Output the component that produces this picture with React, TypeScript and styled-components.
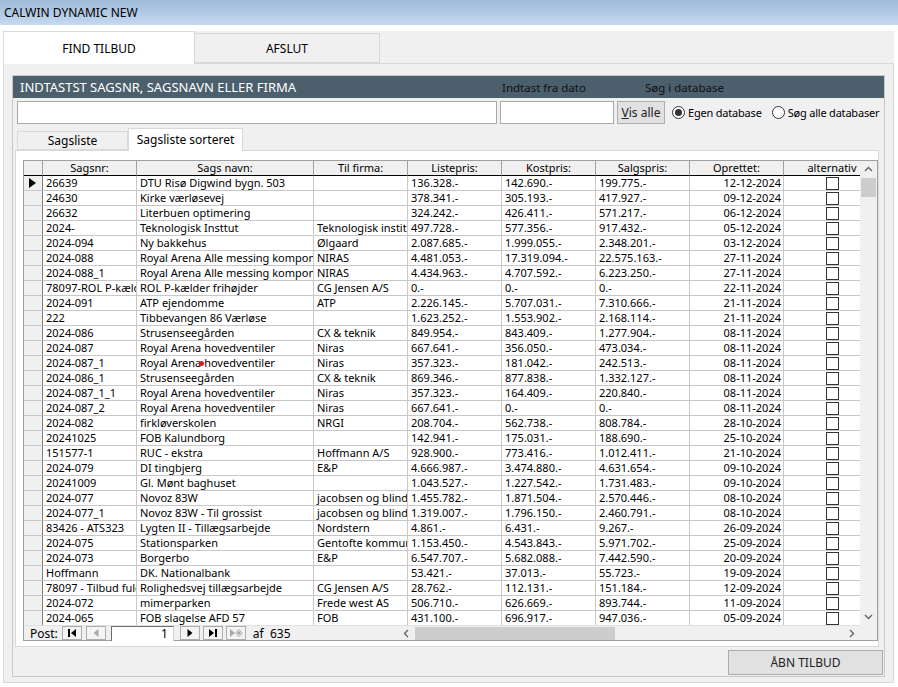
import React from "react";
import styled, { createGlobalStyle } from "styled-components";

const GlobalStyle = createGlobalStyle`
  html, body { margin: 0; padding: 0; background: #fff; }
  body {
    font-family: "Noto Sans", "Open Sans", sans-serif;
    font-size: 11px;
    color: #000;
  }
  * { box-sizing: border-box; }
`;

type Row = [string, string, string, string, string, string, string];

const rows: Row[] = [
  ["26639", "DTU Risø Digwind bygn. 503", "", "136.328.-", "142.690.-", "199.775.-", "12-12-2024"],
  ["24630", "Kirke værløsevej", "", "378.341.-", "305.193.-", "417.927.-", "09-12-2024"],
  ["26632", "Literbuen optimering", "", "324.242.-", "426.411.-", "571.217.-", "06-12-2024"],
  ["2024-", "Teknologisk Insttut", "Teknologisk institut", "497.728.-", "577.356.-", "917.432.-", "05-12-2024"],
  ["2024-094", "Ny bakkehus", "Ølgaard", "2.087.685.-", "1.999.055.-", "2.348.201.-", "03-12-2024"],
  ["2024-088", "Royal Arena Alle messing komponenter", "NIRAS", "4.481.053.-", "17.319.094.-", "22.575.163.-", "27-11-2024"],
  ["2024-088_1", "Royal Arena Alle messing komponenter", "NIRAS", "4.434.963.-", "4.707.592.-", "6.223.250.-", "27-11-2024"],
  ["78097-ROL P-kælder", "ROL P-kælder frihøjder", "CG Jensen A/S", "0.-", "0.-", "0.-", "22-11-2024"],
  ["2024-091", "ATP ejendomme", "ATP", "2.226.145.-", "5.707.031.-", "7.310.666.-", "21-11-2024"],
  ["222", "Tibbevangen 86 Værløse", "", "1.623.252.-", "1.553.902.-", "2.168.114.-", "21-11-2024"],
  ["2024-086", "Strusenseegården", "CX & teknik", "849.954.-", "843.409.-", "1.277.904.-", "08-11-2024"],
  ["2024-087", "Royal Arena hovedventiler", "Niras", "667.641.-", "356.050.-", "473.034.-", "08-11-2024"],
  ["2024-087_1", "Royal Arena hovedventiler", "Niras", "357.323.-", "181.042.-", "242.513.-", "08-11-2024"],
  ["2024-086_1", "Strusenseegården", "CX & teknik", "869.346.-", "877.838.-", "1.332.127.-", "08-11-2024"],
  ["2024-087_1_1", "Royal Arena hovedventiler", "Niras", "357.323.-", "164.409.-", "220.840.-", "08-11-2024"],
  ["2024-087_2", "Royal Arena hovedventiler", "Niras", "667.641.-", "0.-", "0.-", "08-11-2024"],
  ["2024-082", "firkløverskolen", "NRGI", "208.704.-", "562.738.-", "808.784.-", "28-10-2024"],
  ["20241025", "FOB Kalundborg", "", "142.941.-", "175.031.-", "188.690.-", "25-10-2024"],
  ["151577-1", "RUC - ekstra", "Hoffmann A/S", "928.900.-", "773.416.-", "1.012.411.-", "21-10-2024"],
  ["2024-079", "DI tingbjerg", "E&P", "4.666.987.-", "3.474.880.-", "4.631.654.-", "09-10-2024"],
  ["20241009", "Gl. Mønt baghuset", "", "1.043.527.-", "1.227.542.-", "1.731.483.-", "09-10-2024"],
  ["2024-077", "Novoz 83W", "jacobsen og blindkjær", "1.455.782.-", "1.871.504.-", "2.570.446.-", "08-10-2024"],
  ["2024-077_1", "Novoz 83W - Til grossist", "jacobsen og blindkjær", "1.319.007.-", "1.796.150.-", "2.460.791.-", "08-10-2024"],
  ["83426 - ATS323", "Lygten II - Tillægsarbejde", "Nordstern", "4.861.-", "6.431.-", "9.267.-", "26-09-2024"],
  ["2024-075", "Stationsparken", "Gentofte kommune", "1.153.450.-", "4.543.843.-", "5.971.702.-", "25-09-2024"],
  ["2024-073", "Borgerbo", "E&P", "6.547.707.-", "5.682.088.-", "7.442.590.-", "20-09-2024"],
  ["Hoffmann", "DK. Nationalbank", "", "53.421.-", "37.013.-", "55.723.-", "19-09-2024"],
  ["78097 - Tilbud fuld", "Rolighedsvej tillægsarbejde", "CG Jensen A/S", "28.762.-", "112.131.-", "151.184.-", "12-09-2024"],
  ["2024-072", "mimerparken", "Frede west AS", "506.710.-", "626.669.-", "893.744.-", "11-09-2024"],
  ["2024-065", "FOB slagelse AFD 57", "FOB", "431.100.-", "696.917.-", "947.036.-", "05-09-2024"],
];

const headers = ["Sagsnr:", "Sags navn:", "Til firma:", "Listepris:", "Kostpris:", "Salgspris:", "Oprettet:", "alternativ"];
const COLS = "19px 94px 177px 94px 94px 94px 94px 94px 97px";

const Window = styled.div`
  position: relative;
  width: 898px;
  height: 687px;
  overflow: hidden;
  background: #fff;
`;

const TitleBar = styled.div`
  height: 25px;
  padding-left: 4px;
  display: flex;
  align-items: center;
  background: linear-gradient(#9fb9d9, #c5d9ef);
  font-size: 12px;
`;

const Frame = styled.div`
  margin: 6px 0 0 3px;
  width: 891px;
  height: 652px;
  background: #f0f0f0;
`;

const TabStrip = styled.div`
  display: flex;
  align-items: flex-end;
  height: 32px;
`;

const Tab = styled.div<{ $active?: boolean; $w: number }>`
  position: relative;
  z-index: 1;
  width: ${(p) => p.$w}px;
  height: ${(p) => (p.$active ? 33 : 30)}px;
  margin-bottom: ${(p) => (p.$active ? -1 : 0)}px;
  background: ${(p) => (p.$active ? "#fff" : "#f0f0f0")};
  border: 1px solid #d9d9d9;
  border-bottom: ${(p) => (p.$active ? "none" : "1px solid #d9d9d9")};
  border-left: ${(p) => (p.$active ? "1px solid #d9d9d9" : "none")};
  display: flex;
  align-items: center;
  justify-content: center;
  font-size: 12px;
`;

const TabPanel = styled.div`
  height: 620px;
  border: 1px solid #d9d9d9;
  padding: 11px 7px 0 8px;
`;

const GroupBox = styled.div`
  width: 873px;
  height: 602px;
  border: 1px solid #c8c8c8;
  display: flex;
  flex-direction: column;
`;

const HeaderBar = styled.div`
  height: 22px;
  background: #4b5f6c;
  display: grid;
  grid-template-columns: 482px 143px 1fr;
  align-items: center;
  padding-left: 7px;
`;

const HeaderLabel = styled.span<{ $light?: boolean }>`
  color: ${(p) => (p.$light ? "#fff" : "#111")};
  font-size: ${(p) => (p.$light ? 13 : 11.5)}px;
  white-space: nowrap;
`;

const SearchRow = styled.div`
  margin-top: 2px;
  height: 24px;
  padding-left: 4px;
  display: flex;
  align-items: center;
  gap: 3px;
`;

const TextBox = styled.div<{ $w: number }>`
  flex: 0 0 ${(p) => p.$w}px;
  height: 23px;
  background: #fff;
  border: 1px solid #a9a9a9;
`;

const Button = styled.div<{ $w: number; $h: number }>`
  flex: 0 0 ${(p) => p.$w}px;
  height: ${(p) => p.$h}px;
  background: #e1e1e1;
  border: 1px solid #adadad;
  display: flex;
  align-items: center;
  justify-content: center;
  font-size: 12px;
  color: #222;
  white-space: nowrap;
`;

const RadioGroup = styled.div`
  margin-left: 4px;
  display: flex;
  align-items: center;
  gap: 10px;
  font-size: 11px;
  letter-spacing: -0.2px;
  white-space: nowrap;
`;

const RadioItem = styled.label`
  display: flex;
  align-items: center;
  gap: 3px;
`;

const RadioDot = styled.span<{ $on?: boolean }>`
  flex: 0 0 13px;
  height: 13px;
  border-radius: 50%;
  border: 1px solid #333;
  background: #fff;
  display: flex;
  align-items: center;
  justify-content: center;
  &::after {
    content: "";
    width: 7px;
    height: 7px;
    border-radius: 50%;
    background: ${(p) => (p.$on ? "#333" : "transparent")};
  }
`;

const SubTabs = styled.div`
  margin: 4px 0 0 4px;
  height: 22px;
  display: flex;
  align-items: flex-end;
`;

const SubTab = styled.div<{ $active?: boolean; $w: number }>`
  position: relative;
  z-index: 1;
  width: ${(p) => p.$w}px;
  height: ${(p) => (p.$active ? 23 : 19)}px;
  margin-bottom: ${(p) => (p.$active ? -1 : 0)}px;
  background: ${(p) => (p.$active ? "#fff" : "#f0f0f0")};
  border: 1px solid #d9d9d9;
  border-bottom: ${(p) => (p.$active ? "none" : "1px solid #d9d9d9")};
  display: flex;
  align-items: ${(p) => (p.$active ? "flex-start" : "center")};
  padding-top: ${(p) => (p.$active ? 2 : 0)}px;
  justify-content: center;
  font-size: 12px;
`;

const SubPanel = styled.div`
  margin-left: 2px;
  width: 864px;
  height: 497px;
  background: #fff;
  border: 1px solid #d9d9d9;
  padding: 9px 0 0 7px;
`;

const Sheet = styled.div`
  width: 855px;
  height: 481px;
  border: 1px solid #a0a0a0;
  display: grid;
  grid-template-columns: 836px 17px;
  grid-template-rows: 464px 15px;
  background: #fff;
`;

const GridBody = styled.div`
  overflow: hidden;
`;

const GridRow = styled.div`
  display: grid;
  grid-template-columns: ${COLS};
  width: 863px;
  height: 15px;
`;

const HeadCell = styled.div`
  height: 15px;
  line-height: 14px;
  background: #f0f0f0;
  border-right: 1px solid #a0a0a0;
  border-bottom: 1px solid #000;
  text-align: center;
  white-space: nowrap;
  overflow: hidden;
`;

const Selector = styled.div`
  height: 15px;
  background: #f0f0f0;
  border-right: 1px solid #808080;
  border-bottom: 1px solid #c8c8c8;
  display: flex;
  align-items: center;
  padding-left: 5px;
`;

const Cell = styled.div<{ $align?: "left" | "right" | "center" }>`
  height: 15px;
  line-height: 14px;
  border-right: 1px solid #c8c8c8;
  border-bottom: 1px solid #c8c8c8;
  padding: 0 2px 0 3px;
  text-align: ${(p) => p.$align || "left"};
  white-space: nowrap;
  overflow: hidden;
  display: ${(p) => (p.$align === "center" ? "flex" : "block")};
  justify-content: center;
  align-items: center;
`;

const CheckBox = styled.span`
  width: 13px;
  height: 13px;
  border: 1px solid #333;
  background: #fff;
`;

const VScroll = styled.div`
  background: #f0f0f0;
  display: flex;
  flex-direction: column;
`;

const ScrollArrow = styled.div`
  flex: 0 0 17px;
  display: flex;
  align-items: center;
  justify-content: center;
`;

const VThumb = styled.div`
  margin: 0 1px;
  height: 19px;
  background: #cdcdcd;
`;

const Spacer = styled.div`
  flex: 1;
`;

const NavBar = styled.div`
  display: flex;
  align-items: center;
  background: #f0f0f0;
  border-top: 1px solid #e0e0e0;
`;

const NavGroup = styled.div`
  width: 374px;
  display: flex;
  align-items: center;
  padding-left: 6px;
  height: 15px;
  font-size: 12px;
`;

const NavButton = styled.div<{ $gap?: number }>`
  width: 20px;
  height: 14px;
  margin-left: ${(p) => p.$gap ?? 3}px;
  background: #f4f4f4;
  border: 1px solid #adadad;
  display: flex;
  align-items: center;
  justify-content: center;
`;

const PostInput = styled.div`
  width: 63px;
  height: 15px;
  margin-left: 5px;
  background: #fff;
  border-top: 1px solid #6e6e6e;
  border-left: 1px solid #6e6e6e;
  border-right: 1px solid #d0d0d0;
  text-align: right;
  padding-right: 5px;
  line-height: 14px;
`;

const NavCount = styled.span`
  margin-left: 7px;
`;

const HScroll = styled.div`
  flex: 1;
  height: 15px;
  display: flex;
  align-items: center;
`;

const HArrow = styled.div`
  flex: 0 0 17px;
  display: flex;
  justify-content: center;
  align-items: center;
`;

const HThumb = styled.div`
  width: 200px;
  height: 13px;
  background: #cdcdcd;
`;

const Corner = styled.div`
  background: #f0f0f0;
`;

const ButtonRow = styled.div`
  margin-top: 3px;
  display: flex;
  justify-content: flex-end;
  padding-right: 1px;
`;

const RedDot = styled.span`
  position: absolute;
  left: 199px;
  top: 361px;
  width: 5px;
  height: 5px;
  border-radius: 50%;
  background: #e3141b;
`;

const Chevron = ({ dir }: { dir: "up" | "down" | "left" | "right" }) => {
  const rot = { up: 0, right: 90, down: 180, left: 270 }[dir];
  return (
    <svg width="9" height="9" viewBox="0 0 9 9">
      <path d="M1 6 L4.5 2.5 L8 6" fill="none" stroke="#606060" strokeWidth="1.3" transform={`rotate(${rot} 4.5 4.5)`} />
    </svg>
  );
};

const NavIcon = ({ kind, off }: { kind: "first" | "prev" | "next" | "last" | "new"; off?: boolean }) => {
  const c = off ? "#a8a8a8" : "#000";
  return (
    <svg width="14" height="10" viewBox="0 0 14 10">
      {kind === "first" && (
        <>
          <rect x="3" y="1" width="2" height="8" fill={c} />
          <path d="M11 1 L6 5 L11 9 Z" fill={c} />
        </>
      )}
      {kind === "prev" && <path d="M9.5 1 L4.5 5 L9.5 9 Z" fill={c} />}
      {kind === "next" && <path d="M4.5 1 L9.5 5 L4.5 9 Z" fill={c} />}
      {kind === "last" && (
        <>
          <path d="M3 1 L8 5 L3 9 Z" fill={c} />
          <rect x="9" y="1" width="2" height="8" fill={c} />
        </>
      )}
      {kind === "new" && (
        <>
          <path d="M1 1 L6 5 L1 9 Z" fill={c} />
          <path d="M10 1 V9 M6 5 H14 M7.2 2.2 L12.8 7.8 M12.8 2.2 L7.2 7.8" stroke={c} strokeWidth="1" />
        </>
      )}
    </svg>
  );
};

export default function App() {
  return (
    <Window>
      <GlobalStyle />
      <TitleBar>CALWIN DYNAMIC NEW</TitleBar>
      <Frame>
        <TabStrip>
          <Tab $active $w={192}>FIND TILBUD</Tab>
          <Tab $w={185}>AFSLUT</Tab>
        </TabStrip>
        <TabPanel>
          <GroupBox>
            <HeaderBar>
              <HeaderLabel $light>INDTASTST SAGSNR, SAGSNAVN ELLER FIRMA</HeaderLabel>
              <HeaderLabel>Indtast fra dato</HeaderLabel>
              <HeaderLabel>Søg i database</HeaderLabel>
            </HeaderBar>
            <SearchRow>
              <TextBox $w={480} />
              <TextBox $w={114} />
              <Button $w={48} $h={23}>
                <span><u>V</u>is alle</span>
              </Button>
              <RadioGroup>
                <RadioItem>
                  <RadioDot $on />
                  Egen database
                </RadioItem>
                <RadioItem>
                  <RadioDot />
                  Søg alle databaser
                </RadioItem>
              </RadioGroup>
            </SearchRow>
            <SubTabs>
              <SubTab $w={111}>Sagsliste</SubTab>
              <SubTab $active $w={115}>Sagsliste sorteret</SubTab>
            </SubTabs>
            <SubPanel>
              <Sheet>
                <GridBody>
                  <GridRow>
                    <HeadCell />
                    {headers.map((h) => (
                      <HeadCell key={h}>{h}</HeadCell>
                    ))}
                  </GridRow>
                  {rows.map((r, i) => (
                    <GridRow key={i}>
                      <Selector>
                        {i === 0 && (
                          <svg width="7" height="10" viewBox="0 0 7 10">
                            <path d="M0 0 L7 5 L0 10 Z" fill="#000" />
                          </svg>
                        )}
                      </Selector>
                      {r.slice(0, 6).map((v, j) => (
                        <Cell key={j}>{v}</Cell>
                      ))}
                      <Cell $align="right">{r[6]}</Cell>
                      <Cell $align="center">
                        <CheckBox />
                      </Cell>
                    </GridRow>
                  ))}
                </GridBody>
                <VScroll>
                  <ScrollArrow>
                    <Chevron dir="up" />
                  </ScrollArrow>
                  <VThumb />
                  <Spacer />
                  <ScrollArrow>
                    <Chevron dir="down" />
                  </ScrollArrow>
                </VScroll>
                <NavBar>
                  <NavGroup>
                    Post:
                    <NavButton $gap={4}>
                      <NavIcon kind="first" />
                    </NavButton>
                    <NavButton $gap={4}>
                      <NavIcon kind="prev" off />
                    </NavButton>
                    <PostInput>1</PostInput>
                    <NavButton $gap={6}>
                      <NavIcon kind="next" />
                    </NavButton>
                    <NavButton $gap={3}>
                      <NavIcon kind="last" />
                    </NavButton>
                    <NavButton $gap={3}>
                      <NavIcon kind="new" off />
                    </NavButton>
                    <NavCount>af&nbsp; 635</NavCount>
                  </NavGroup>
                  <HScroll>
                    <HArrow>
                      <Chevron dir="left" />
                    </HArrow>
                    <HThumb />
                    <Spacer />
                    <HArrow>
                      <Chevron dir="right" />
                    </HArrow>
                  </HScroll>
                </NavBar>
                <Corner />
              </Sheet>
            </SubPanel>
            <ButtonRow>
              <Button $w={155} $h={25}>ÅBN TILBUD</Button>
            </ButtonRow>
          </GroupBox>
        </TabPanel>
      </Frame>
      <RedDot />
    </Window>
  );
}
